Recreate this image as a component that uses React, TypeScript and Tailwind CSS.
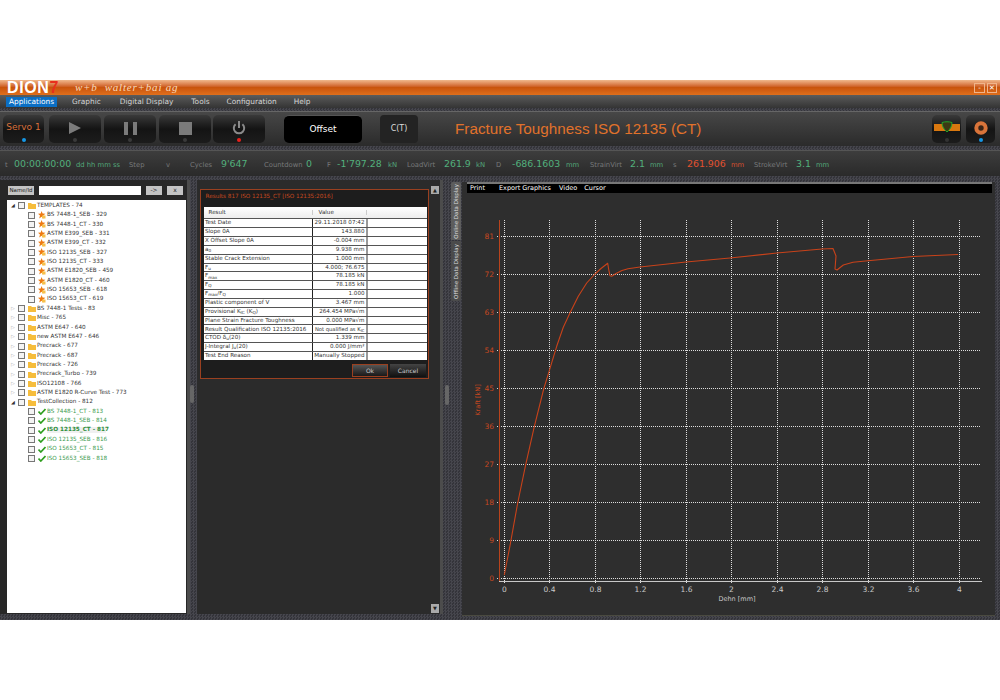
import React from 'react';

const dejavu = 'font-["DejaVu_Sans",sans-serif]';
const texture = 'bg-[repeating-conic-gradient(#46464d_0_25%,#34343a_0_50%)] bg-[length:3px_3px]';

const templates = ['BS 7448-1_SEB - 329', 'BS 7448-1_CT - 330', 'ASTM E399_SEB - 331', 'ASTM E399_CT - 332', 'ISO 12135_SEB - 327', 'ISO 12135_CT - 333', 'ASTM E1820_SEB - 459', 'ASTM E1820_CT - 460', 'ISO 15653_SEB - 618', 'ISO 15653_CT - 619'];
const folders = ['BS 7448-1 Tests - 83', 'Misc - 765', 'ASTM E647 - 640', 'new ASTM E647 - 646', 'Precrack - 677', 'Precrack - 687', 'Precrack - 726', 'Precrack_Turbo - 739', 'ISO12108 - 766', 'ASTM E1820 R-Curve Test - 773'];
const collection = ['BS 7448-1_CT - 813', 'BS 7448-1_SEB - 814', 'ISO 12135_CT - 817', 'ISO 12135_SEB - 816', 'ISO 15653_CT - 815', 'ISO 15653_SEB - 818'];

const results: [React.ReactNode, React.ReactNode][] = [
  ['Test Date', '29.11.2018 07:42'],
  ['Slope 0A', '143.880'],
  ['X Offset Slope 0A', '-0.004 mm'],
  [<>a<sub>0</sub></>, '9.938 mm'],
  ['Stable Crack Extension', '1.000 mm'],
  [<>F<sub>u</sub></>, '4.000; 76.675'],
  [<>F<sub>max</sub></>, '78.185 kN'],
  [<>F<sub>Q</sub></>, '78.185 kN'],
  [<>F<sub>max</sub>/F<sub>Q</sub></>, '1.000'],
  ['Plastic component of V', '3.467 mm'],
  [<>Provisional K<sub>IC</sub> (K<sub>Q</sub>)</>, '264.454 MPa√m'],
  ['Plane Strain Fracture Toughness', '0.000 MPa√m'],
  ['Result Qualification ISO 12135:2016', <span className="text-[5.2px]">Not qualified as K<sub>IC</sub></span>],
  [<>CTOD δ<sub>u</sub>(20)</>, '1.339 mm'],
  [<>J-Integral J<sub>u</sub>(20)</>, '0.000 J/mm²'],
  ['Test End Reason', 'Manually Stopped'],
];

const curve = '504.3,576 510,546.7 517.7,504 525.7,465.7 534.3,427.7 543.7,390 549.3,371.7 556.7,347.3 563.3,328.3 570.3,313.3 578.3,297.3 586.7,284 595,275 601,269.5 607.7,264.3 608.8,271 610,276.7 611.7,277.3 616,274.5 622,271.5 628,269.7 640,268 686,263 730,259 777,254 822,250 833,249.5 836,257 835,270 837,271 843.3,266 853,263.3 868,261.7 913,257.5 958,255.5';

const Folder = () => (
  <svg width="8" height="7" viewBox="0 0 8 7" className="shrink-0"><path d="M0 1h3l1 1h4v5H0z" fill="#f6bd3c" /></svg>
);
const Star = () => (
  <svg width="8" height="8" viewBox="0 0 8 8" className="shrink-0"><path d="M3.6 0l1 2.6 2.8.2-2.2 1.800.8 2.800-2.400-1.600L1.200 7.400 2 4.600 0 2.800l2.700-.2z" fill="#ee7a12" /><rect x="4" y="4.500" width="3.500" height="3" fill="#f6c04a" /></svg>
);
const Check = () => (
  <svg width="8" height="7" viewBox="0 0 8 7" className="shrink-0"><path d="M.5 3.600l2.300 2.400L7.500 1" fill="none" stroke="#2f9e1f" strokeWidth="1.700" /></svg>
);
const Box = () => <span className="w-[7px] h-[7px] shrink-0 border border-[#777] bg-[#f4f4f4]" />;

const Row = ({ label, icon, child, open, labelClass = '' }: { label: string; icon: React.ReactNode; child?: boolean; open?: boolean; labelClass?: string }) => (
  <div className={`h-[9.36px] flex items-center whitespace-nowrap ${child ? 'pl-[21px]' : 'pl-[4px]'}`}>
    {!child && <span className={`w-[7px] text-[5px] leading-none ${open ? 'text-[#333]' : 'text-[#aaa]'}`}>{open ? '◢' : '▷'}</span>}
    <Box />
    <span className="w-[3px] shrink-0" />
    {icon}
    <span className={`ml-[1px] ${labelClass}`}>{label}</span>
  </div>
);

const ToolButton = ({ w, led, children }: { w: string; led: string; children?: React.ReactNode }) => (
  <div className={`${w} h-[28px] rounded-[5px] bg-gradient-to-b from-[#3a3a3a] via-[#141414] to-[#1c1c1c] relative flex items-center justify-center`}>
    {children}
    <span className={`absolute bottom-[1px] left-1/2 -translate-x-1/2 w-[4px] h-[4px] rounded-full ${led}`} />
  </div>
);

const Stat = ({ w, kind, children }: { w: string; kind: 'label' | 'value' | 'unit' | 'redValue' | 'redUnit'; children: React.ReactNode }) => {
  const styles = {
    label: 'text-[6.8px] text-[#77797a]',
    value: 'text-[9.4px] text-[#52b07c]',
    unit: 'text-[6.8px] text-[#52a97a]',
    redValue: 'text-[9.4px] text-[#e2512f]',
    redUnit: 'text-[6.8px] text-[#d9502f]',
  };
  return <span className={`${w} shrink-0 whitespace-nowrap ${styles[kind]}`}>{children}</span>;
};

const Chart = () => {
  const ys = [0, 9, 18, 27, 36, 45, 54, 63, 72, 81];
  const xs = ['0', '0.4', '0.8', '1.2', '1.6', '2', '2.4', '2.8', '3.2', '3.6', '4'];
  return (
    <svg viewBox="462 194 533 420" className="block w-[533px] h-[420px]" fontFamily="DejaVu Sans, sans-serif">
      {ys.map((v) => {
        const y = Math.round(579.3 - (v / 9) * 38) + 0.5;
        return (
          <g key={v}>
            <line x1="497" x2="980" y1={y} y2={y} stroke="#dedede" strokeDasharray="1 1" />
            <text x="494" y={y + 2.5} textAnchor="end" fontSize="7.5" fill="#c8481f">{v}</text>
          </g>
        );
      })}
      {xs.map((v, i) => {
        const x = Math.round(504 + i * 45.45) + 0.5;
        return (
          <g key={v}>
            <line x1={x} x2={x} y1="221" y2="584" stroke="#dedede" strokeDasharray="1 1" />
            <text x={x} y="593" textAnchor="middle" fontSize="7.5" fill="#c9c9c9">{v}</text>
          </g>
        );
      })}
      <line x1="499.5" x2="499.5" y1="221" y2="583" stroke="#b8431c" />
      <line x1="499" x2="982" y1="582.5" y2="582.5" stroke="#c8c8c8" />
      <polyline points={curve} fill="none" stroke="#c8421a" strokeWidth="1.1" strokeLinejoin="round" />
      <text x="737" y="602" textAnchor="middle" fontSize="6.5" fill="#c9c9c9">Dehn [mm]</text>
      <text transform="translate(480 401) rotate(-90)" textAnchor="middle" fontSize="6.5" fill="#c8481f">Kraft [kN]</text>
    </svg>
  );
};

export default function App() {
  return (
    <div className={`h-[700px] bg-white pt-[80px] overflow-hidden ${dejavu}`}>
      <div className={`h-[540px] flex flex-col ${texture}`}>
        {/* Title bar */}
        <div className="h-[15px] shrink-0 flex items-center bg-gradient-to-b from-[#f0b88c] via-[#c9540c] to-[#e06f1c] pl-[7px] pr-[3px]">
          <span className='font-["Liberation_Sans",sans-serif] font-bold text-[16px] leading-none tracking-[0.6px] text-white'>DION<span className="text-[#e8301c]">7</span></span>
          <span className='ml-[16px] font-["Liberation_Serif",serif] italic text-[11px] leading-none tracking-[0.8px] text-[#f6d9bd] whitespace-pre'>w+b  walter+bai ag</span>
          <span className="ml-auto w-[11px] h-[10px] border border-[#f0b48a] text-white text-[7px] leading-[8px] text-center">-</span>
          <span className="ml-[2px] w-[10px] h-[10px] border border-[#f0b48a] text-white text-[7px] leading-[8px] text-center">✕</span>
        </div>

        {/* Menu */}
        <div className="h-[13px] shrink-0 flex items-center bg-gradient-to-b from-[#5c5c5c] to-[#343434] text-[7.4px] text-[#d4d4d4] pl-[6px]">
          <span className="w-[51px] h-[10px] bg-[#0b6ec4] text-white leading-[10px] text-center">Applications</span>
          <span className="ml-[15px]">Graphic</span>
          <span className="ml-[19px]">Digital Display</span>
          <span className="ml-[18px]">Tools</span>
          <span className="ml-[17px]">Configuration</span>
          <span className="ml-[17px]">Help</span>
        </div>
        <div className="h-[3px] shrink-0" />

        {/* Toolbar */}
        <div className="h-[35px] shrink-0 flex items-center border-t border-[#666] bg-gradient-to-b from-[#474747] to-[#2b2b2b] pl-[3px] pr-[5px]">
          <ToolButton w="w-[41px]" led="bg-[#1597e5]">
            <span className="text-[#d9703a] text-[9px] mb-[2px] whitespace-nowrap">Servo 1</span>
          </ToolButton>
          <div className="ml-[5px]">
            <ToolButton w="w-[52px]" led="bg-[#3a3a3a]">
              <svg width="14" height="14" viewBox="0 0 14 14" className="mb-[2px]"><path d="M1 1l12 6-12 6z" fill="#7b7b7b" /></svg>
            </ToolButton>
          </div>
          <div className="ml-[3px]">
            <ToolButton w="w-[52px]" led="bg-[#3a3a3a]">
              <svg width="13" height="13" viewBox="0 0 13 13" className="mb-[2px]"><path d="M0 0h4v13H0zM9 0h4v13H9z" fill="#7b7b7b" /></svg>
            </ToolButton>
          </div>
          <div className="ml-[3px]">
            <ToolButton w="w-[52px]" led="bg-[#3a3a3a]">
              <svg width="13" height="13" viewBox="0 0 13 13" className="mb-[2px]"><path d="M0 0h13v13H0z" fill="#7b7b7b" /></svg>
            </ToolButton>
          </div>
          <div className="ml-[2px]">
            <ToolButton w="w-[52px]" led="bg-[#e8201c]">
              <svg width="14" height="14" viewBox="0 0 14 14" className="mb-[3px]" fill="none" stroke="#8a8a8a" strokeWidth="2"><path d="M7 0v7M3.600 3.200a5.200 5.200 0 1 0 6.800 0" /></svg>
            </ToolButton>
          </div>
          <div className="ml-[19px] w-[78px] h-[28px] rounded-[5px] bg-black border-t border-[#555] text-white text-[9px] flex items-center justify-center">Offset</div>
          <div className="ml-[18px] w-[38px] h-[28px] rounded-[4px] bg-[#232323] text-[#dddddd] text-[8px] flex items-center justify-center">C(T)</div>
          <span className='ml-[37px] font-["Liberation_Sans",sans-serif] text-[15.25px] text-[#e1722b] whitespace-nowrap'>Fracture Toughness ISO 12135 (CT)</span>
          <div className="ml-auto">
            <ToolButton w="w-[29px]" led="bg-[#333]">
              <svg width="26" height="14" viewBox="0 0 26 14" className="mb-[2px]"><path d="M0 3h26v7H0z" fill="#d9780f" /><path d="M8 1.500c3-1 7-1 10 0 0 4-2 7-5 9.500-3-2.500-5-5.500-5-9.500z" fill="#3b3a14" stroke="#22a52a" strokeWidth="1" /></svg>
            </ToolButton>
          </div>
          <div className="ml-[5px]">
            <ToolButton w="w-[29px]" led="bg-[#1597e5]">
              <svg width="14" height="14" viewBox="0 0 14 14" className="mb-[3px]"><circle cx="7" cy="7" r="4.700" fill="#3a2416" stroke="#d9743a" strokeWidth="4" /></svg>
            </ToolButton>
          </div>
        </div>
        <div className="h-[4px] shrink-0" />

        {/* Status strip */}
        <div className="h-[26px] shrink-0 flex items-baseline pt-[8px] border-t border-[#555] bg-gradient-to-b from-[#3d3d3d] to-[#2a2a2a] pl-[5px] leading-none">
          <Stat w="w-[9px]" kind="label">t</Stat>
          <Stat w="w-[62px]" kind="value">00:00:00:00</Stat>
          <Stat w="w-[53px]" kind="unit">dd hh mm ss</Stat>
          <Stat w="w-[37px]" kind="label">Step</Stat>
          <Stat w="w-[24px]" kind="label">v</Stat>
          <Stat w="w-[31px]" kind="label">Cycles</Stat>
          <Stat w="w-[43px]" kind="value">9'647</Stat>
          <Stat w="w-[42px]" kind="label">Countdown</Stat>
          <Stat w="w-[21px]" kind="value">0</Stat>
          <Stat w="w-[10px]" kind="label">F</Stat>
          <Stat w="w-[51px]" kind="value">-1'797.28</Stat>
          <Stat w="w-[19px]" kind="unit">kN</Stat>
          <Stat w="w-[37px]" kind="label">LoadVirt</Stat>
          <Stat w="w-[32px]" kind="value">261.9</Stat>
          <Stat w="w-[20px]" kind="unit">kN</Stat>
          <Stat w="w-[16px]" kind="label">D</Stat>
          <Stat w="w-[54px]" kind="value">-686.1603</Stat>
          <Stat w="w-[24px]" kind="unit">mm</Stat>
          <Stat w="w-[40px]" kind="label">StrainVirt</Stat>
          <Stat w="w-[20px]" kind="value">2.1</Stat>
          <Stat w="w-[23px]" kind="unit">mm</Stat>
          <Stat w="w-[14px]" kind="label">s</Stat>
          <Stat w="w-[44px]" kind="redValue">261.906</Stat>
          <Stat w="w-[23px]" kind="redUnit">mm</Stat>
          <Stat w="w-[42px]" kind="label">StrokeVirt</Stat>
          <Stat w="w-[20px]" kind="value">3.1</Stat>
          <Stat w="w-[20px]" kind="unit">mm</Stat>
        </div>
        <div className="h-[4px] shrink-0" />

        {/* Workspace */}
        <div className="flex-1 flex min-h-0">
          {/* Tree panel */}
          <div className="w-[190px] shrink-0 h-[434px] bg-[#272727] border-r-[3px] border-[#4c4c4c] pl-[7px] flex flex-col">
            <div className="h-[20px] shrink-0 flex items-center pt-[1px]">
              <span className="w-[26px] ml-[1px] h-[9px] bg-[#c4c4c4] text-[#222] text-[5.500px] leading-[9px] text-center">Name/Id</span>
              <span className="w-[102px] ml-[5px] h-[9px] bg-white" />
              <span className="w-[16px] ml-[5px] h-[9px] bg-[#c4c4c4] text-[#222] text-[6px] leading-[8px] text-center">-&gt;</span>
              <span className="w-[16px] ml-[5px] h-[9px] bg-[#c4c4c4] text-[#222] text-[6px] leading-[8px] text-center">x</span>
            </div>
            <div className="w-[179px] h-[413px] bg-white text-[5.700px] leading-none text-[#333] pt-[1px]">
              <Row label="TEMPLATES - 74" icon={<Folder />} open />
              {templates.map((t) => <Row key={t} label={t} icon={<Star />} child />)}
              {folders.map((f) => <Row key={f} label={f} icon={<Folder />} />)}
              <Row label="TestCollection - 812" icon={<Folder />} open />
              {collection.map((c, i) => (
                <Row key={c} label={c} icon={<Check />} child labelClass={i === 2 ? 'text-[#2f8f3c] font-bold bg-[#f0f0f0] w-[59px]' : 'text-[#3a9a4e]'} />
              ))}
            </div>
          </div>

          {/* Splitter */}
          <div className="w-[7px] shrink-0 relative">
            <span className="absolute left-[0px] top-[205px] w-[4px] h-[18px] rounded-[2px] bg-[#666]" />
          </div>

          {/* Results panel */}
          <div className="w-[246px] shrink-0 h-[434px] bg-[#2b2b2b] border-r-[3px] border-[#4c4c4c] flex">
            <div className="w-[233px] shrink-0 pl-[3px] pt-[9px]">
              <div className="w-[229px] h-[190px] border border-[#9a4020] bg-[#1d1d1d] pl-[2.500px]">
                <div className="h-[17px] pl-[2px] pt-[3px] text-[5.700px] leading-[7px] text-[#c8491f] whitespace-nowrap">Results 817 ISO 12135_CT [ISO 12135:2016]</div>
                <div className="w-[223px] h-[153px] bg-white text-[5.600px] text-[#333] leading-none">
                  <div className="h-[11.300px] flex items-center bg-gradient-to-b from-white to-[#ededed]">
                    <span className="w-[109px] pl-[5px] border-r border-[#ccc]">Result</span>
                    <span className="w-[54px] pl-[6px] border-r border-[#ccc]">Value</span>
                  </div>
                  {results.map(([k, v], i) => (
                    <div key={i} className="h-[8.850px] flex items-center border-t border-[#555] whitespace-nowrap">
                      <span className="w-[109px] shrink-0 pl-[1.500px] border-r border-[#222] h-full flex items-center overflow-hidden"><span>{k}</span></span>
                      <span className="w-[55px] shrink-0 pr-[1px] border-r-2 border-[#999] h-full flex items-center justify-end overflow-hidden"><span>{v}</span></span>
                    </div>
                  ))}
                </div>
                <div className="flex justify-end gap-[2px] pt-[4px] pr-[2px]">
                  <span className="w-[36px] h-[13px] border border-[#9a4020] bg-gradient-to-b from-[#555] to-[#1a1a1a] text-[#ccc] text-[6px] leading-[11px] text-center">Ok</span>
                  <span className="w-[36px] h-[13px] bg-gradient-to-b from-[#444] to-[#111] text-[#ccc] text-[6px] leading-[13px] text-center">Cancel</span>
                </div>
              </div>
            </div>
            {/* Scrollbar */}
            <div className="w-[10px] shrink-0 flex flex-col justify-between items-center pt-[6px] pb-[1px]">
              <span className="w-[8px] h-[8px] bg-[#aaa] text-[#222] text-[5px] leading-[8px] text-center">▲</span>
              <span className="w-[8px] h-[9px] bg-[#aaa] text-[#222] text-[5px] leading-[9px] text-center">▼</span>
            </div>
          </div>

          {/* Tabs */}
          <div className="w-[19px] shrink-0 pl-[8px] pt-[2px] relative">
            <div className="w-[10px] h-[58px] bg-[#5d5d5d] rounded-t-[2px] text-[#ddd] text-[5.500px] flex items-center justify-center">
              <span className="[writing-mode:vertical-rl] rotate-180 whitespace-nowrap">Online Data Display</span>
            </div>
            <div className="mt-[1px] w-[10px] h-[60px] bg-[#4b4b4b] rounded-b-[2px] text-[#ddd] text-[5.500px] flex items-center justify-center">
              <span className="[writing-mode:vertical-rl] rotate-180 whitespace-nowrap">Offline Data Display</span>
            </div>
            <span className="absolute left-[2px] top-[205px] w-[4px] h-[20px] rounded-[2px] bg-[#666]" />
          </div>

          {/* Chart panel */}
          <div className="w-[533px] shrink-0 h-[434px] mt-[2px] bg-[#2e2e2e] border-b border-[#4a4a40]">
            <div className="h-[2px] ml-[5px] mr-[3px] bg-[#777]" />
            <div className="h-[9px] ml-[5px] mr-[3px] bg-black text-white text-[6.500px] leading-[9px] flex pl-[3px]">
              <span>Print</span>
              <span className="ml-[14px]">Export Graphics</span>
              <span className="ml-[8px]">Video</span>
              <span className="ml-[7px]">Cursor</span>
            </div>
            <Chart />
          </div>
        </div>
      </div>
    </div>
  );
}
